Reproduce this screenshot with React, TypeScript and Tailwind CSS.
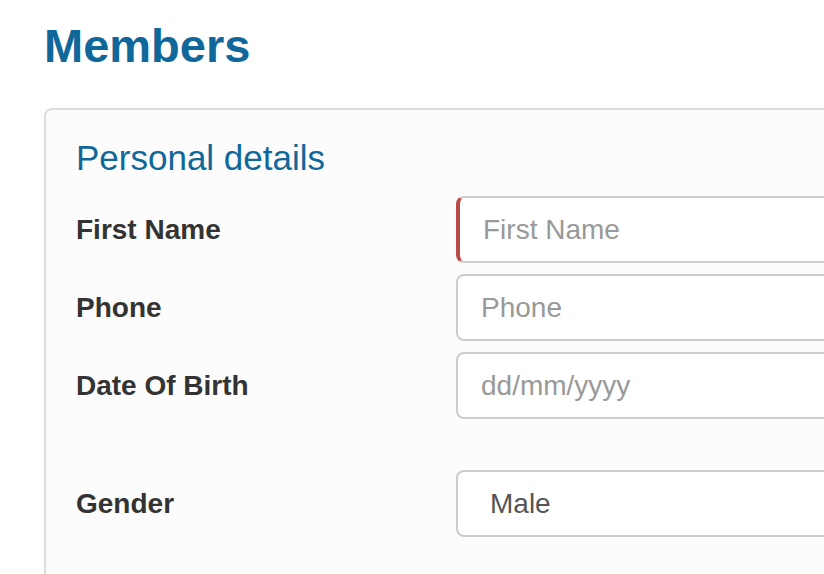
import { useState } from "react";

type Field = {
  label: string;
  placeholder: string;
  error?: boolean;
  extraGap?: boolean;
};

const fields: Field[] = [
  { label: "First Name", placeholder: "First Name", error: true },
  { label: "Phone", placeholder: "Phone" },
  { label: "Date Of Birth", placeholder: "dd/mm/yyyy", extraGap: true },
];

export default function App(): JSX.Element {
  const [gender, setGender] = useState("Male");

  return (
    <div
      className="h-[574px] w-full overflow-hidden bg-white pl-[44px]"
      style={{ fontFamily: '"Liberation Sans", Arial, sans-serif' }}
    >
      <h1 className="mt-[22px] text-[47px] leading-[47px] font-bold text-[#10689a]">Members</h1>

      <div className="mt-[39px] w-[1000px] rounded-[8px] border-2 border-[#dddddd] bg-[#fcfcfc] pt-[30px] pl-[30px] pb-[60px]">
        <h3 className="text-[35px] leading-[35px] text-[#10689a]">Personal details</h3>

        <div className="mt-[21px] flex flex-col gap-[11px]">
          {fields.map((f) => (
            <div key={f.label} className={`flex items-center ${f.extraGap ? "mb-[40px]" : ""}`}>
              <label className="w-[380px] text-[28px] font-bold text-[#333333]">{f.label}</label>
              <input
                className={`h-[67px] w-[560px] rounded-[8px] border-2 border-[#cccccc] bg-white pl-[23px] text-[28px] text-[#555555] outline-none placeholder:text-[#999999] ${
                  f.error ? "border-l-4 border-l-[#b94a48]" : ""
                }`}
                placeholder={f.placeholder}
              />
            </div>
          ))}

          <div className="flex items-center">
            <label className="w-[380px] text-[28px] font-bold text-[#333333]">Gender</label>
            <select
              className="h-[67px] w-[560px] appearance-none rounded-[8px] border-2 border-[#cccccc] bg-white pl-[32px] text-[28px] text-[#555555] outline-none"
              value={gender}
              onChange={(e) => setGender(e.target.value)}
            >
              <option>Male</option>
              <option>Female</option>
            </select>
          </div>
        </div>
      </div>
    </div>
  );
}
